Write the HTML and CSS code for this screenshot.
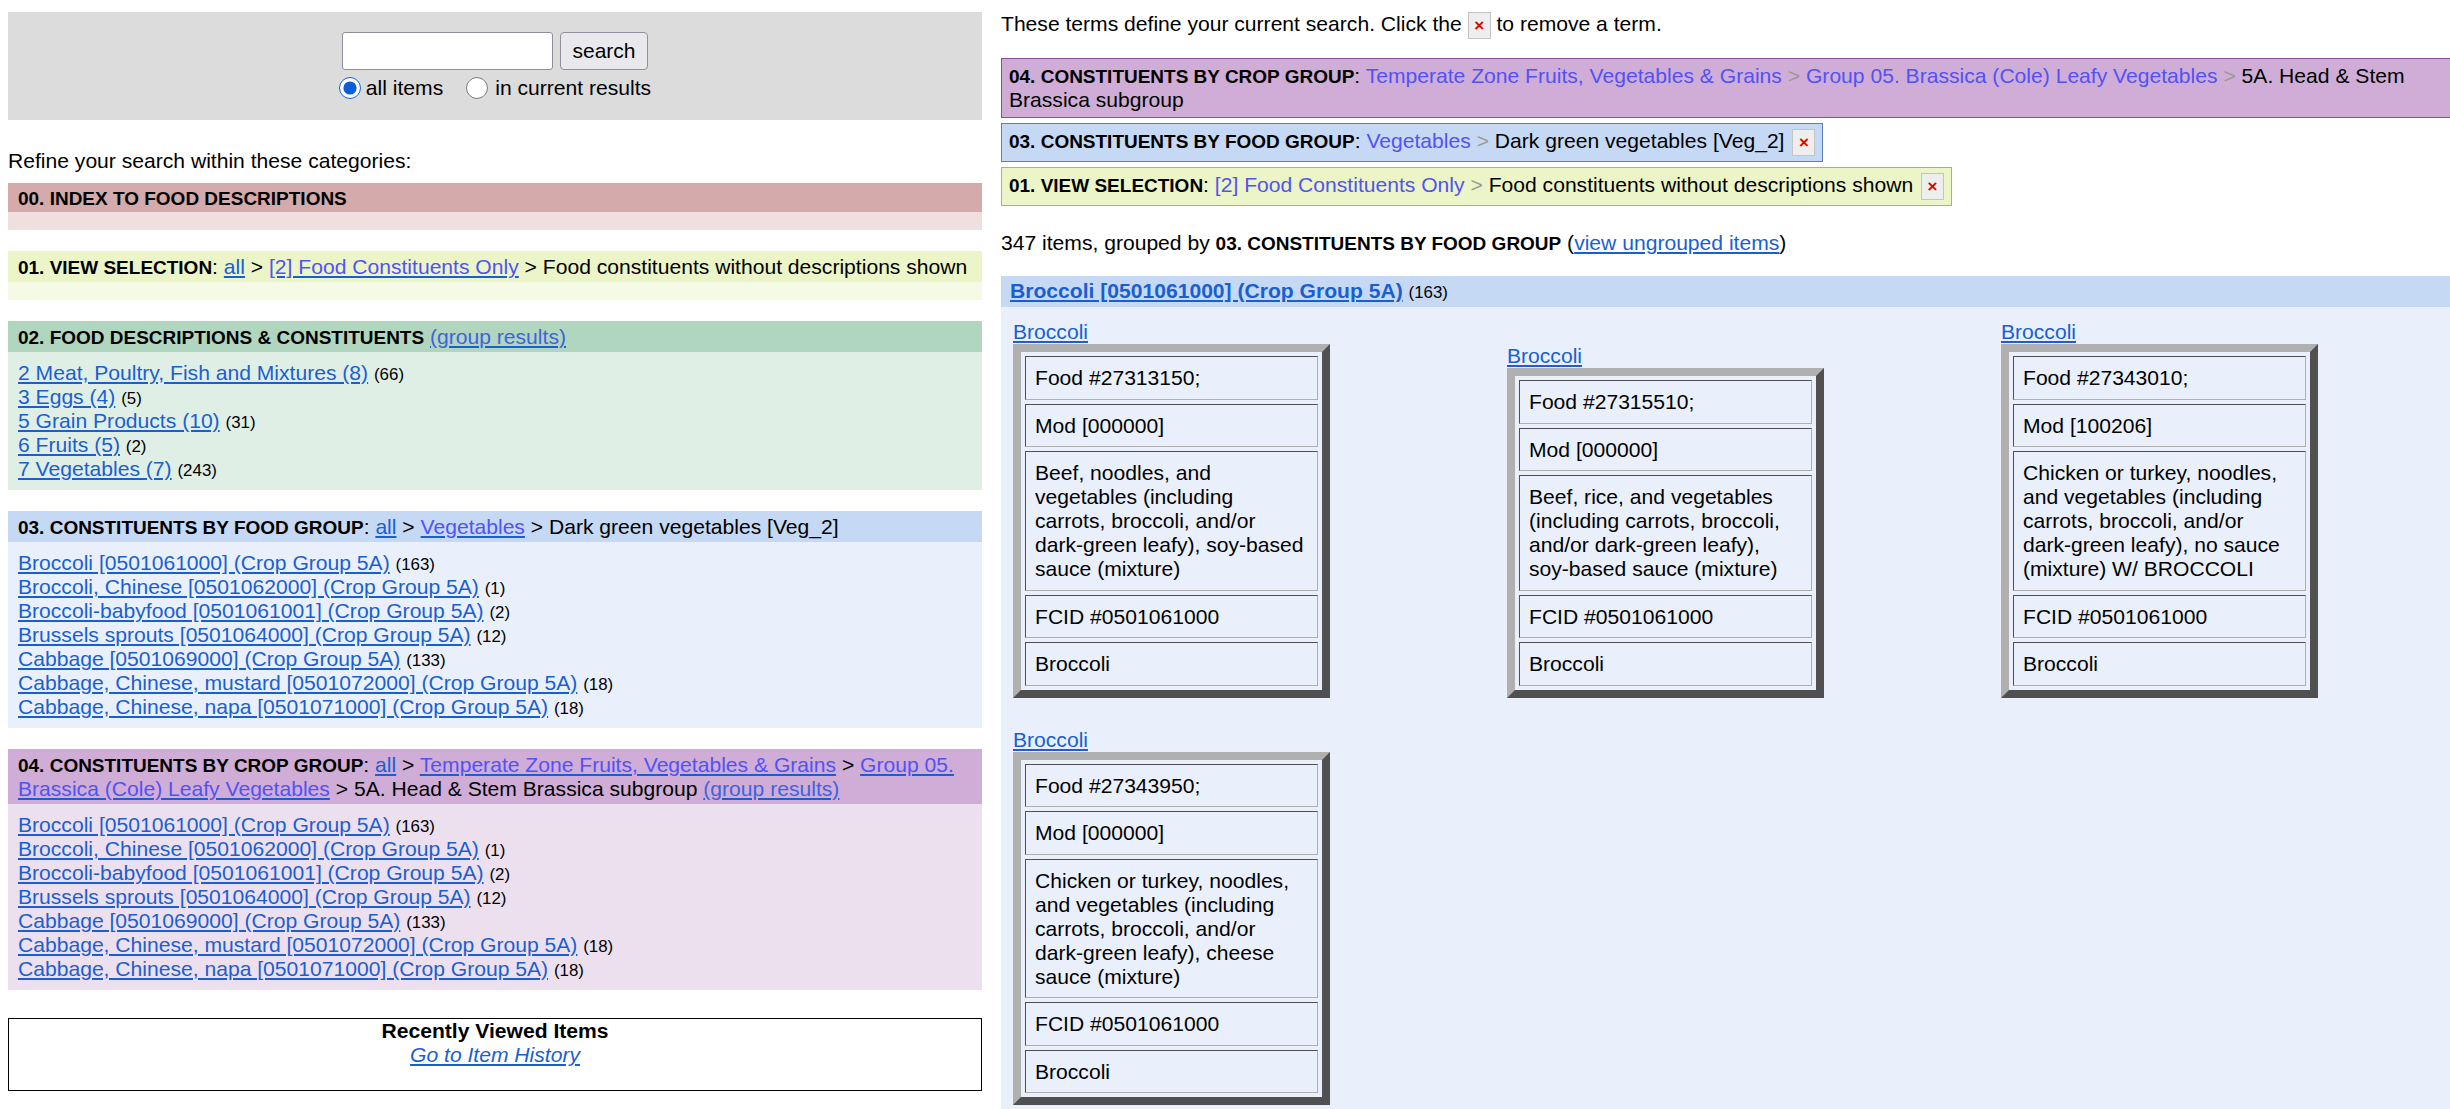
FILE: index.html
```html
<!DOCTYPE html>
<html>
<head>
<meta charset="utf-8">
<title>Food Constituents</title>
<link rel="stylesheet" href="styles.css">
</head>
<body>
<div class="left">
  <div class="search">
    <div class="search-row">
      <input class="search-input" type="text">
      <button class="search-btn" type="button">search</button>
    </div>
    <div class="scope">
      <label class="scope-opt"><input type="radio" name="scope" checked>all items</label>
      <label class="scope-opt scope-opt2"><input type="radio" name="scope">in current results</label>
    </div>
  </div>

  <p class="refine">Refine your search within these categories:</p>

  <div class="facet">
    <div class="facet-hd hd-00 hd-short"><b class="ft">00. INDEX TO FOOD DESCRIPTIONS</b></div>
    <div class="facet-bd bd-00"></div>
  </div>

  <div class="facet">
    <div class="facet-hd hd-01"><b class="ft">01. VIEW SELECTION</b>: <a class="lnk" href="#">all</a> &gt; <a class="lnk" href="#"><span class="v">[2] Food Constituents Only</span></a> &gt; Food constituents without descriptions shown</div>
    <div class="facet-bd bd-01"></div>
  </div>

  <div class="facet">
    <div class="facet-hd hd-02"><b class="ft">02. FOOD DESCRIPTIONS &amp; CONSTITUENTS</b> <a class="lnk" href="#"><span class="v2">(group results)</span></a></div>
    <div class="facet-bd bd-02">
      <div><a class="lnk" href="#">2 Meat, Poultry, Fish and Mixtures (8)</a> <span class="count">(66)</span></div>
      <div><a class="lnk" href="#">3 Eggs (4)</a> <span class="count">(5)</span></div>
      <div><a class="lnk" href="#">5 Grain Products (10)</a> <span class="count">(31)</span></div>
      <div><a class="lnk" href="#">6 Fruits (5)</a> <span class="count">(2)</span></div>
      <div><a class="lnk" href="#">7 Vegetables (7)</a> <span class="count">(243)</span></div>
    </div>
  </div>

  <div class="facet">
    <div class="facet-hd hd-03"><b class="ft">03. CONSTITUENTS BY FOOD GROUP</b>: <a class="lnk" href="#">all</a> &gt; <a class="lnk" href="#"><span class="v">Vegetables</span></a> &gt; Dark green vegetables [Veg_2]</div>
    <div class="facet-bd bd-03">
      <div><a class="lnk" href="#">Broccoli [0501061000] (Crop Group 5A)</a> <span class="count">(163)</span></div>
      <div><a class="lnk" href="#">Broccoli, Chinese [0501062000] (Crop Group 5A)</a> <span class="count">(1)</span></div>
      <div><a class="lnk" href="#">Broccoli-babyfood [0501061001] (Crop Group 5A)</a> <span class="count">(2)</span></div>
      <div><a class="lnk" href="#">Brussels sprouts [0501064000] (Crop Group 5A)</a> <span class="count">(12)</span></div>
      <div><a class="lnk" href="#">Cabbage [0501069000] (Crop Group 5A)</a> <span class="count">(133)</span></div>
      <div><a class="lnk" href="#">Cabbage, Chinese, mustard [0501072000] (Crop Group 5A)</a> <span class="count">(18)</span></div>
      <div><a class="lnk" href="#">Cabbage, Chinese, napa [0501071000] (Crop Group 5A)</a> <span class="count">(18)</span></div>
    </div>
  </div>

  <div class="facet facet-last">
    <div class="facet-hd hd-04"><b class="ft">04. CONSTITUENTS BY CROP GROUP</b>: <a class="lnk" href="#">all</a> &gt; <a class="lnk" href="#"><span class="v">Temperate Zone Fruits, Vegetables &amp; Grains</span></a> &gt; <a class="lnk" href="#"><span class="v">Group 05. Brassica (Cole) Leafy Vegetables</span></a> &gt; 5A. Head &amp; Stem Brassica subgroup <a class="lnk" href="#"><span class="v2">(group results)</span></a></div>
    <div class="facet-bd bd-04">
      <div><a class="lnk" href="#">Broccoli [0501061000] (Crop Group 5A)</a> <span class="count">(163)</span></div>
      <div><a class="lnk" href="#">Broccoli, Chinese [0501062000] (Crop Group 5A)</a> <span class="count">(1)</span></div>
      <div><a class="lnk" href="#">Broccoli-babyfood [0501061001] (Crop Group 5A)</a> <span class="count">(2)</span></div>
      <div><a class="lnk" href="#">Brussels sprouts [0501064000] (Crop Group 5A)</a> <span class="count">(12)</span></div>
      <div><a class="lnk" href="#">Cabbage [0501069000] (Crop Group 5A)</a> <span class="count">(133)</span></div>
      <div><a class="lnk" href="#">Cabbage, Chinese, mustard [0501072000] (Crop Group 5A)</a> <span class="count">(18)</span></div>
      <div><a class="lnk" href="#">Cabbage, Chinese, napa [0501071000] (Crop Group 5A)</a> <span class="count">(18)</span></div>
    </div>
  </div>

  <div class="recent">
    <div class="recent-title">Recently Viewed Items</div>
    <a class="lnk recent-link" href="#">Go to Item History</a>
  </div>
</div>

<div class="right">
  <div class="intro">These terms define your current search. Click the <span class="x">×</span> to remove a term.</div>

  <div class="terms">
    <div class="term term-04"><b class="ft">04. CONSTITUENTS BY CROP GROUP</b>: <a class="crumb" href="#">Temperate Zone Fruits, Vegetables &amp; Grains</a> <span class="sep">&gt;</span> <a class="crumb" href="#">Group 05. Brassica (Cole) Leafy Vegetables</a> <span class="sep">&gt;</span> 5A. Head &amp; Stem Brassica subgroup</div>
    <div class="term-row"><div class="term term-03"><b class="ft">03. CONSTITUENTS BY FOOD GROUP</b>: <a class="crumb" href="#">Vegetables</a> <span class="sep">&gt;</span> Dark green vegetables [Veg_2] <span class="x">×</span></div></div>
    <div class="term-row"><div class="term term-01"><b class="ft">01. VIEW SELECTION</b>: <a class="crumb" href="#">[2] Food Constituents Only</a> <span class="sep">&gt;</span> Food constituents without descriptions shown <span class="x">×</span></div></div>
  </div>

  <p class="summary">347 items, grouped by <b class="ft">03. CONSTITUENTS BY FOOD GROUP</b> (<a class="lnk" href="#">view ungrouped items</a>)</p>

  <div class="group-bar"><a class="lnk group-link" href="#">Broccoli [0501061000] (Crop Group 5A)</a> <span class="count">(163)</span></div>

  <div class="results">
    <div class="item">
      <div class="item-title"><a class="lnk" href="#">Broccoli</a></div>
      <div class="card">
        <div class="cell">Food #27313150;</div>
        <div class="cell">Mod [000000]</div>
        <div class="cell">Beef, noodles, and vegetables (including carrots, broccoli, and/or dark-green leafy), soy-based sauce (mixture)</div>
        <div class="cell">FCID #0501061000</div>
        <div class="cell">Broccoli</div>
      </div>
    </div>
    <div class="item">
      <div class="item-title"><a class="lnk" href="#">Broccoli</a></div>
      <div class="card">
        <div class="cell">Food #27315510;</div>
        <div class="cell">Mod [000000]</div>
        <div class="cell">Beef, rice, and vegetables (including carrots, broccoli, and/or dark-green leafy), soy-based sauce (mixture)</div>
        <div class="cell">FCID #0501061000</div>
        <div class="cell">Broccoli</div>
      </div>
    </div>
    <div class="item">
      <div class="item-title"><a class="lnk" href="#">Broccoli</a></div>
      <div class="card">
        <div class="cell">Food #27343010;</div>
        <div class="cell">Mod [100206]</div>
        <div class="cell">Chicken or turkey, noodles, and vegetables (including carrots, broccoli, and/or dark-green leafy), no sauce (mixture) W/ BROCCOLI</div>
        <div class="cell">FCID #0501061000</div>
        <div class="cell">Broccoli</div>
      </div>
    </div>
    <div class="item">
      <div class="item-title"><a class="lnk" href="#">Broccoli</a></div>
      <div class="card">
        <div class="cell">Food #27343950;</div>
        <div class="cell">Mod [000000]</div>
        <div class="cell">Chicken or turkey, noodles, and vegetables (including carrots, broccoli, and/or dark-green leafy), cheese sauce (mixture)</div>
        <div class="cell">FCID #0501061000</div>
        <div class="cell">Broccoli</div>
      </div>
    </div>
  </div>
</div>
</body>
</html>
```

FILE: styles.css
```css
html {
  overflow: hidden;
}

body {
  margin: 0;
  padding: 12px 0 0 8px;
  font-family: "Liberation Sans", Arial, sans-serif;
  font-size: 21.1px;
  line-height: 24px;
  color: #000;
  background: #fff;
  display: flex;
  align-items: flex-start;
}

.lnk {
  color: #1a5fd2;
  text-decoration: underline;
}

.v {
  color: #5252f5;
}

.v2 {
  color: #3f62de;
}

.ft {
  font-size: 0.9em;
  font-weight: bold;
  line-height: 1;
}

.count {
  font-size: 0.8em;
  line-height: 1;
}

/* ---------- left column ---------- */
.left {
  width: 974px;
  flex: none;
}

.search {
  background: #dcdcdc;
  padding: 20px 0;
  display: flex;
  flex-direction: column;
  align-items: center;
  gap: 6px;
}

.search-row {
  display: flex;
  gap: 7px;
}

.search-input {
  width: 211px;
  height: 38px;
  box-sizing: border-box;
  border: 1px solid #8f8f9d;
  border-radius: 3px;
  background: #fff;
  margin: 0;
  padding: 0 4px;
}

.search-btn {
  width: 88px;
  height: 38px;
  box-sizing: border-box;
  border: 1px solid #8f8f9d;
  border-radius: 4px;
  background: #e9e9ed;
  color: #000;
  font-family: inherit;
  font-size: 21px;
  margin: 0;
  padding: 0;
}

.scope {
  display: flex;
  align-items: center;
  height: 24px;
}

.scope-opt {
  display: flex;
  align-items: center;
}

.scope-opt input {
  width: 22px;
  height: 22px;
  margin: 0 5px 0 0;
  accent-color: #0b5ed7;
}

.scope-opt2 {
  margin-left: 23px;
}

.scope-opt2 input {
  margin-right: 7px;
}

.refine {
  margin: 29px 0 10px;
}

.facet {
  margin-bottom: 21px;
}

.facet-last {
  margin-bottom: 28px;
}

.facet-hd {
  padding: 4px 10px 3px;
}

.hd-short {
  padding: 3px 10px 2px;
}

.facet-bd {
  padding: 9px 10px;
}

.hd-00 { background: #d4aaaa; }
.bd-00 { background: #efdfdf; }
.hd-01 { background: #ebf5c7; }
.bd-01 { background: #f5fae4; }
.hd-02 { background: #b0d6bf; }
.bd-02 { background: #e0efe5; }
.hd-03 { background: #c5d9f5; }
.bd-03 { background: #e9f0fb; }
.hd-04 { background: #cfadd6; }
.bd-04 { background: #ece0ef; }

.recent {
  border: 1px solid #000;
  padding: 0 0 23px;
  text-align: center;
}

.recent-title {
  font-weight: bold;
}

.recent-link {
  font-style: italic;
}

/* ---------- right column ---------- */
.right {
  width: 1479px;
  flex: none;
  margin-left: 19px;
}

.intro {
  margin-bottom: 19px;
}

.x {
  display: inline-block;
  width: 21px;
  height: 25px;
  border: 1px solid #c4c4c4;
  background: #eeeeee;
  color: #e00000;
  font-weight: bold;
  font-size: 17px;
  line-height: 25px;
  text-align: center;
  vertical-align: middle;
}

.term {
  border: 1px solid;
  padding: 5px 7px;
  margin-bottom: 5px;
}

.term .x {
  margin-left: 2px;
}

.term-row {
  display: flex;
}

.term-04 {
  background: #cfadd6;
  border-color: #8b4f9c;
}

.term-03 {
  background: #c5d9f5;
  border-color: #5a7dbf;
}

.term-01 {
  background: #ebf5c7;
  border-color: #a9b85c;
}

.crumb {
  color: #5252f5;
  text-decoration: none;
}

.sep {
  color: #999;
}

.summary {
  margin: 20px 0 21px;
}

.group-bar {
  background: #c5d9f5;
  padding: 3px 9px 4px;
}

.group-link {
  font-weight: bold;
}

.results {
  background: #e9f0fb;
  padding: 13px 12px 40px;
  display: flex;
  flex-wrap: wrap;
  align-items: flex-end;
  column-gap: 177px;
  row-gap: 30px;
}

.item {
  width: 317px;
}

.card {
  border: 8px solid;
  border-color: #b0b0b0 #505050 #505050 #b0b0b0;
  padding: 4px;
  display: flex;
  flex-direction: column;
  gap: 4px;
}

.cell {
  border: 1px solid;
  border-color: #505050 #b0b0b0 #b0b0b0 #505050;
  padding: 9px 9px 8.5px;
}
```
